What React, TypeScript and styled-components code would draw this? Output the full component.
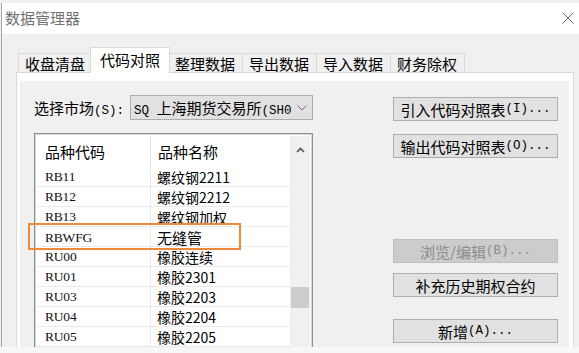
import React from "react";
import styled, { createGlobalStyle } from "styled-components";

const CJK = `"Noto Sans CJK SC", "Noto Sans", sans-serif`;
const HALF = `"Liberation Mono", monospace`;

const GlobalStyle = createGlobalStyle`
  html, body {
    margin: 0;
    padding: 0;
    background: #f0f0f0;
  }
  body {
    font-family: ${CJK};
    color: #000;
  }
`;

const TABS = ["收盘清盘", "代码对照", "整理数据", "导出数据", "导入数据", "财务除权"];
const ACTIVE_TAB = 1;

type Row = { code: string; name: string; fresh?: boolean };

const ROWS: Row[] = [
  { code: "RB11", name: "螺纹钢2211" },
  { code: "RB12", name: "螺纹钢2212" },
  { code: "RB13", name: "螺纹钢加权" },
  { code: "RBWFG", name: "无缝管", fresh: true },
  { code: "RU00", name: "橡胶连续" },
  { code: "RU01", name: "橡胶2301" },
  { code: "RU03", name: "橡胶2203" },
  { code: "RU04", name: "橡胶2204" },
  { code: "RU05", name: "橡胶2205" },
];

// scroll thumb offset inside the track, px
const THUMB_TOP = 123;

export default function App() {
  return (
    <>
      <GlobalStyle />
      <Window>
        <Frame>
          <TitleBar>
            <Title>数据管理器</Title>
            <CloseIcon width="12" height="12" viewBox="0 0 12 12">
              <path d="M0.5 0.5 L11.5 11.5 M11.5 0.5 L0.5 11.5" />
            </CloseIcon>
          </TitleBar>

          <Content>
            <TabStrip>
              {TABS.map((t, i) => (
                <Tab key={t} $active={i === ACTIVE_TAB}>
                  {t}
                </Tab>
              ))}
            </TabStrip>

            <Panel>
              <PageBody>
                <LeftCol>
                  <MarketRow>
                    <Label>
                      选择市场<Half>(S):</Half>
                    </Label>
                    <Combo>
                      <ComboText>
                        <Half>SQ </Half>上海期货交易所<Half>(SH0</Half>
                      </ComboText>
                      <Chevron width="10" height="6" viewBox="0 0 10 6">
                        <path d="M0.5 0.5 L5 5 L9.5 0.5" />
                      </Chevron>
                    </Combo>
                  </MarketRow>

                  <ListBox>
                    <Table>
                      <HeaderRow>
                        <HeadCell $first>品种代码</HeadCell>
                        <HeadCell>品种名称</HeadCell>
                      </HeaderRow>
                      {ROWS.map((r) => (
                        <DataRow key={r.code}>
                          <CodeCell>{r.code}</CodeCell>
                          <NameCell $fresh={r.fresh}>{r.name}</NameCell>
                        </DataRow>
                      ))}
                    </Table>
                    <ScrollBar>
                      <ScrollArrow>
                        <svg width="9" height="6" viewBox="0 0 9 6">
                          <path d="M1 5 L4.5 1.5 L8 5" fill="none" stroke="#555" strokeWidth="1.6" />
                        </svg>
                      </ScrollArrow>
                      <Thumb style={{ marginTop: THUMB_TOP }} />
                    </ScrollBar>
                  </ListBox>
                </LeftCol>

                <ButtonCol>
                  <Button>
                    引入代码对照表<Half>(I)...</Half>
                  </Button>
                  <Button $mt={13}>
                    输出代码对照表<Half>(O)...</Half>
                  </Button>
                  <Button $mt={81} disabled>
                    浏览/编辑<Half>(B)...</Half>
                  </Button>
                  <Button $mt={10}>补充历史期权合约</Button>
                  <Button $mt={22}>
                    新增<Half>(A)...</Half>
                  </Button>
                </ButtonCol>
              </PageBody>
            </Panel>
          </Content>
        </Frame>
        <Footer />
        <Highlight />
      </Window>
    </>
  );
}

/* ---------------- window ---------------- */

const Window = styled.div`
  width: 579px;
  height: 353px;
  box-sizing: border-box;
  padding-top: 3px;
  display: flex;
  flex-direction: column;
  position: relative;
  overflow: hidden;
  background: #f0f0f0;
`;

const Frame = styled.div`
  flex: 1;
  min-height: 0;
  display: flex;
  flex-direction: column;
  margin-left: 1px;
  border-left: 1px solid #a6a6a6;
`;

const TitleBar = styled.div`
  height: 31px;
  flex: none;
  display: flex;
  align-items: center;
  justify-content: space-between;
  padding: 0 5px 2px 3px;
  box-sizing: border-box;
  background: #fff;
`;

const Title = styled.span`
  font-size: 15px;
  color: #707070;
  line-height: 1;
`;

const CloseIcon = styled.svg`
  fill: none;
  stroke: #6a6a6a;
  stroke-width: 1;
`;

const Content = styled.div`
  flex: 1;
  min-height: 0;
  display: flex;
  flex-direction: column;
  padding: 0 5px 0 14px;
`;

const Footer = styled.div`
  height: 6px;
  flex: none;
  background: #f7f7f7;
`;

const Highlight = styled.div`
  position: absolute;
  left: 28px;
  top: 223px;
  width: 213px;
  height: 27px;
  box-sizing: border-box;
  border: 2px solid #f0883a;
  pointer-events: none;
`;

/* ---------------- tabs ---------------- */

const TabStrip = styled.div`
  height: 38px;
  flex: none;
  display: flex;
  align-items: flex-end;
  padding-left: 2px;
  position: relative;
  z-index: 1;
`;

const Tab = styled.div<{ $active?: boolean }>`
  box-sizing: border-box;
  display: flex;
  align-items: center;
  height: ${(p) => (p.$active ? 26 : 19)}px;
  padding: ${(p) => (p.$active ? "0 9px 2px" : "0 7px 0 6px")};
  margin: ${(p) => (p.$active ? "0 -2px -1px -2px" : "0 -1px 0 0")};
  border: 1px solid #d9d9d9;
  border-bottom: none;
  background: ${(p) => (p.$active ? "#fff" : "#f0f0f0")};
  position: relative;
  z-index: ${(p) => (p.$active ? 2 : 1)};
  font-size: 15px;
  line-height: 1;
  white-space: nowrap;
`;

const Panel = styled.div`
  flex: 1;
  min-height: 0;
  display: flex;
  flex-direction: column;
  padding: 8px 4px 0 3px;
  border: 1px solid #d9d9d9;
  border-bottom: none;
  background: #fff;
  overflow: hidden;
`;

const PageBody = styled.div`
  flex: 1;
  min-height: 0;
  display: flex;
  gap: 80px;
  padding: 14px 0 0 14px;
  background: #f0f0f0;
`;

/* ---------------- left side ---------------- */

const LeftCol = styled.div`
  width: 279px;
  display: flex;
  flex-direction: column;
`;

const Half = styled.span`
  font-family: ${HALF};
  font-size: 12.5px;
`;

const MarketRow = styled.div`
  height: 25px;
  display: flex;
  align-items: center;
  gap: 6px;
`;

const Label = styled.span`
  font-size: 15px;
  white-space: nowrap;
`;

const Combo = styled.div`
  flex: 1;
  height: 25px;
  box-sizing: border-box;
  display: flex;
  align-items: center;
  gap: 4px;
  padding: 0 5px 0 3px;
  border: 1px solid #adadad;
  background: #e1e1e1;
`;

const ComboText = styled.span`
  flex: 1;
  overflow: hidden;
  white-space: nowrap;
  font-size: 15px;
`;

const Chevron = styled.svg`
  flex: none;
  fill: none;
  stroke: #707070;
  stroke-width: 1;
`;

const ListBox = styled.div`
  flex: 1;
  min-height: 0;
  margin-top: 13px;
  display: flex;
  border: 1px solid #8f8f8f;
  border-bottom: none;
  box-shadow: inset 1px 1px 0 #d6d6d6, inset -1px 0 0 #d6d6d6;
  padding: 2px 2px 0 1px;
  background: #fff;
  overflow: hidden;
`;

const Table = styled.div`
  flex: 1;
  min-width: 0;
  background: #fff;
`;

const HeaderRow = styled.div`
  height: 31px;
  display: grid;
  grid-template-columns: 115px 1fr;
`;

const HeadCell = styled.div<{ $first?: boolean }>`
  display: flex;
  align-items: center;
  padding-left: ${(p) => (p.$first ? 9 : 7)}px;
  border-right: ${(p) => (p.$first ? "1px solid #e3e3e3" : "none")};
  font-size: 15px;
`;

const DataRow = styled.div`
  height: 20px;
  box-sizing: border-box;
  display: grid;
  grid-template-columns: 115px 1fr;
  border-bottom: 1px solid #e9e9e9;
`;

const CodeCell = styled.div`
  display: flex;
  align-items: center;
  padding-left: 9px;
  border-right: 1px solid #e9e9e9;
  font-family: "Liberation Serif", serif;
  font-size: 13.5px;
  letter-spacing: -0.2px;
  color: #111;
`;

const NameCell = styled.div<{ $fresh?: boolean }>`
  display: flex;
  align-items: center;
  padding-left: 6px;
  font-size: ${(p) => (p.$fresh ? 15 : 14)}px;
  white-space: nowrap;
`;

const ScrollBar = styled.div`
  width: 20px;
  flex: none;
  display: flex;
  flex-direction: column;
  align-items: center;
  background: #f0f0f0;
`;

const ScrollArrow = styled.div`
  height: 28px;
  width: 100%;
  display: flex;
  align-items: center;
  justify-content: center;
`;

const Thumb = styled.div`
  width: 18px;
  height: 21px;
  background: #cdcdcd;
`;

/* ---------------- right side ---------------- */

const ButtonCol = styled.div`
  width: 165px;
  display: flex;
  flex-direction: column;
  padding-top: 2px;
`;

const Button = styled.button<{ $mt?: number }>`
  height: 24px;
  margin-top: ${(p) => p.$mt ?? 0}px;
  padding: 0;
  display: flex;
  align-items: center;
  justify-content: center;
  border: 1px solid #adadad;
  background: #e1e1e1;
  font-family: ${CJK};
  font-size: 15px;
  color: #000;
  white-space: nowrap;

  &:disabled {
    border-color: #bfbfbf;
    background: #cccccc;
    color: #8a8a8a;
  }
`;
